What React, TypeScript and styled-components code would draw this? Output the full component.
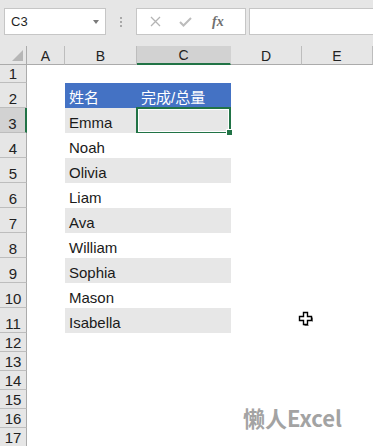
import React from 'react'
import styled, { createGlobalStyle } from 'styled-components'

const GlobalStyle = createGlobalStyle`
  html, body {
    margin: 0;
    padding: 0;
    background: #ffffff;
  }
  body {
    font-family: "Liberation Sans", "Noto Sans CJK SC", sans-serif;
  }
`

const GREEN = '#217346'

const Window = styled.div`
  position: relative;
  width: 373px;
  height: 446px;
  overflow: hidden;
  background: #ffffff;
`

const FormulaBar = styled.div`
  display: flex;
  align-items: flex-start;
  height: 46px;
  box-sizing: border-box;
  padding: 8px 0 0 4px;
  background: #e6e6e6;
`

const NameBox = styled.div`
  display: flex;
  align-items: center;
  justify-content: space-between;
  width: 102px;
  height: 27px;
  box-sizing: border-box;
  padding: 0 6px 0 6px;
  background: #ffffff;
  border: 1px solid #c6c6c6;
  font-size: 13px;
  color: #1f1f1f;
`

const Caret = styled.span`
  width: 0;
  height: 0;
  border-left: 3.5px solid transparent;
  border-right: 3.5px solid transparent;
  border-top: 4px solid #7a7a7a;
  margin-top: 1px;
`

const Dots = styled.div`
  display: flex;
  flex-direction: column;
  gap: 2px;
  width: 30px;
  align-items: center;
  padding-top: 9px;

  span {
    width: 2px;
    height: 2px;
    background: #a8a8a8;
  }
`

const FxBox = styled.div`
  display: flex;
  align-items: center;
  width: 110px;
  height: 27px;
  box-sizing: border-box;
  padding-left: 13px;
  gap: 18px;
  background: #ffffff;
  border: 1px solid #c6c6c6;
`

const FxText = styled.span`
  font-family: "Liberation Serif", serif;
  font-style: italic;
  font-weight: bold;
  font-size: 14px;
  color: #707070;
  margin-left: 2px;
`

const FormulaInput = styled.div`
  flex: 1;
  height: 27px;
  margin-left: 3px;
  box-sizing: border-box;
  background: #ffffff;
  border: 1px solid #c6c6c6;
  border-right: none;
`

const Sheet = styled.div`
  display: grid;
  grid-template-columns: 27px 38px 72px 94px 71px 1fr;
  grid-template-rows: 19px 18px repeat(10, 25px) repeat(6, 19px);
`

const Corner = styled.div`
  position: relative;
  background: #e6e6e6;
  border-right: 1px solid #ababab;
  border-bottom: 1px solid #ababab;
  box-sizing: border-box;

  &::after {
    content: '';
    position: absolute;
    right: 3px;
    bottom: 3px;
    width: 0;
    height: 0;
    border-left: 11px solid transparent;
    border-bottom: 11px solid #b6b6b6;
  }
`

const ColHeader = styled.div<{ $active?: boolean }>`
  display: flex;
  align-items: center;
  justify-content: center;
  box-sizing: border-box;
  background: ${p => (p.$active ? '#d2d2d2' : '#e6e6e6')};
  border-right: 1px solid ${p => (p.$active ? '#d2d2d2' : '#bdbdbd')};
  border-bottom: ${p => (p.$active ? `2px solid ${GREEN}` : '1px solid #ababab')};
  font-size: 14px;
  color: #222222;
  padding-top: 1px;
`

const RowHeader = styled.div<{ $active?: boolean }>`
  display: flex;
  align-items: flex-end;
  justify-content: center;
  box-sizing: border-box;
  background: ${p => (p.$active ? '#d2d2d2' : '#e6e6e6')};
  border-right: ${p => (p.$active ? `2px solid ${GREEN}` : '1px solid #ababab')};
  border-bottom: 1px solid #bdbdbd;
  font-size: 15px;
  line-height: 17px;
  color: #222222;
  padding-bottom: 0;
`

type Tone = 'none' | 'head' | 'band' | 'plain'

const Cell = styled.div<{ $tone: Tone; $selected?: boolean }>`
  position: relative;
  display: flex;
  align-items: flex-end;
  box-sizing: border-box;
  padding: 0 0 1px 4px;
  font-size: 15px;
  line-height: 18px;
  white-space: nowrap;
  background: ${p =>
    p.$tone === 'head' ? '#4472c4' : p.$tone === 'band' ? '#e7e7e7' : '#ffffff'};
  color: ${p => (p.$tone === 'head' ? '#ffffff' : '#1a1a1a')};

  ${p =>
    p.$selected &&
    `
    &::after {
      content: '';
      position: absolute;
      inset: -1px 0 -1px -1px;
      border: 2px solid ${GREEN};
      box-shadow: inset 0 0 0 1px #ffffff;
    }
  `}
`

const FillHandle = styled.span`
  position: absolute;
  right: -2px;
  bottom: -3px;
  width: 5px;
  height: 5px;
  background: ${GREEN};
  border: 1px solid #ffffff;
  z-index: 1;
`

const Watermark = styled.div`
  position: absolute;
  left: 243px;
  top: 403px;
  font-family: "Noto Sans CJK SC", sans-serif;
  font-weight: bold;
  font-size: 22px;
  line-height: 28px;
  color: #a3a3a3;
`

const Cursor = styled.svg`
  position: absolute;
  left: 298px;
  top: 311px;
`

const columns = ['A', 'B', 'C', 'D', 'E']
const names = ['Emma', 'Noah', 'Olivia', 'Liam', 'Ava', 'William', 'Sophia', 'Mason', 'Isabella']
const ROWS = 17

const App: React.FC = () => {
  const rows = Array.from({ length: ROWS }, (_, i) => i + 1)

  const toneFor = (row: number, col: number): Tone => {
    if (col !== 1 && col !== 2) return 'none'
    if (row === 2) return 'head'
    if (row >= 3 && row <= 11) return row % 2 === 1 ? 'band' : 'plain'
    return 'none'
  }

  const textFor = (row: number, col: number) => {
    if (row === 2) return col === 1 ? '姓名' : col === 2 ? '完成/总量' : ''
    if (col === 1 && row >= 3 && row <= 11) return names[row - 3]
    return ''
  }

  return (
    <Window>
      <GlobalStyle />
      <FormulaBar>
        <NameBox>
          <span>C3</span>
          <Caret />
        </NameBox>
        <Dots>
          <span />
          <span />
          <span />
        </Dots>
        <FxBox>
          <svg width="11" height="11" viewBox="0 0 11 11">
            <path d="M1 1 L10 10 M10 1 L1 10" stroke="#b4b4b4" strokeWidth="1.3" fill="none" />
          </svg>
          <svg width="13" height="10" viewBox="0 0 13 10">
            <path d="M1 5 L4.5 8.5 L12 1" stroke="#bcbcbc" strokeWidth="2" fill="none" />
          </svg>
          <FxText>fx</FxText>
        </FxBox>
        <FormulaInput />
      </FormulaBar>

      <Sheet>
        <Corner />
        {columns.map(c => (
          <ColHeader key={c} $active={c === 'C'}>
            {c}
          </ColHeader>
        ))}
        {rows.map(r => (
          <React.Fragment key={r}>
            <RowHeader $active={r === 3}>{r}</RowHeader>
            {columns.map((c, ci) => {
              const selected = r === 3 && c === 'C'
              return (
                <Cell key={c} $tone={toneFor(r, ci)} $selected={selected}>
                  {textFor(r, ci)}
                  {selected && <FillHandle />}
                </Cell>
              )
            })}
          </React.Fragment>
        ))}
      </Sheet>

      <Cursor width="16" height="17" viewBox="0 0 16 17">
        <path
          d="M5.5 1.5 H9.5 V5.5 H13.5 V9.5 H9.5 V13.5 H5.5 V9.5 H1.5 V5.5 H5.5 Z"
          fill="#ffffff"
          stroke="#000000"
          strokeWidth="1.4"
        />
        <path d="M10.5 14.5 H6.5 M14.5 10.5 V6.5" stroke="#555" strokeWidth="1" />
      </Cursor>

      <Watermark>懒人Excel</Watermark>
    </Window>
  )
}

export default App
